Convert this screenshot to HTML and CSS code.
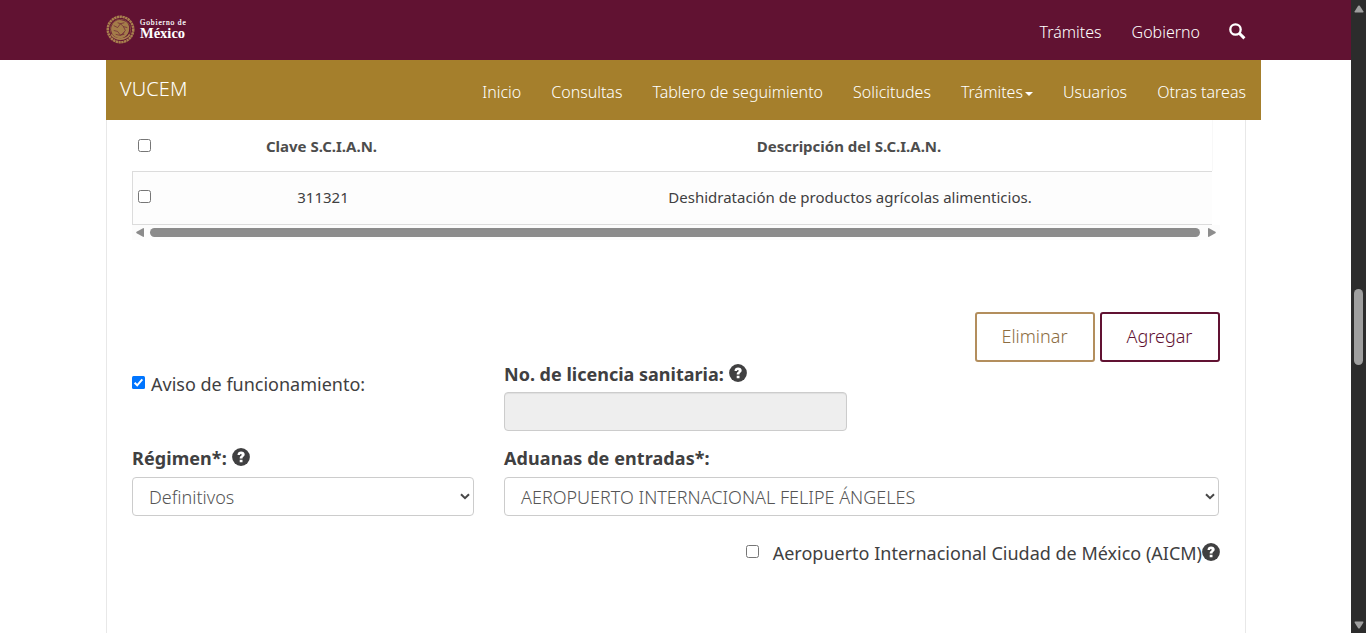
FILE: index.html
```html
<!DOCTYPE html>
<html lang="es">
<head>
<meta charset="utf-8">
<title>VUCEM</title>
<link rel="stylesheet" href="styles.css">
</head>
<body>
<svg class="defs" aria-hidden="true">
  <symbol id="help" viewBox="0 0 18 18">
    <circle cx="9" cy="9" r="8.9" fill="#404041"/>
    <path d="M5.500 7C5.500 4.500 7 3.500 9.100 3.500c2.200 0 3.600 1.200 3.600 3 0 2-2.200 2.100-2.200 3.500v.6H7.700v-.9c0-1.800 2-2 2-3 0-.5-.3-.8-.8-.8-.6 0-.9.400-.9 1.100zM7.700 11.700h2.800v2.600H7.700z" fill="#fff"/>
  </symbol>
  <symbol id="chevron" viewBox="0 0 10 7">
    <path d="M1 1.200 5 5.200 9 1.200" fill="none" stroke="#474747" stroke-width="2"/>
  </symbol>
</svg>
<div class="page">
  <header class="gov">
    <div class="gov-inner">
      <div class="brand">
        <svg class="seal" viewBox="0 0 30 30" fill="none" stroke="#a9814e">
          <circle cx="15" cy="15" r="13.200" stroke-width="2.600" stroke-dasharray="2.400 .5"/>
          <circle cx="15" cy="15" r="10.600" stroke-width=".5"/>
          <path d="M6 11c2-5 7-7 12-5 4 1 6 4 6 8 0 5-3 9-8 10-5 0-9-2-10-6-1-2-1-5 0-7z" fill="#a47d49" stroke="none"/>
          <path d="M8 11l4 2 3-4 3 3 4 1M8 16l4 1 3 4 4-3M12 8l3 1 4-1M10 20l4 1 5-1M18 12l2 4-3 4" stroke="#611232" stroke-width=".6"/>
          <path d="M5.500 20c4 6.500 15 6.500 19 0" stroke-width="1.800"/>
        </svg>
        <div class="wordmark"><span class="word-small">Gobierno de</span><span class="word-big">México</span></div>
      </div>
      <nav class="gov-nav">
        <a>Trámites</a><a>Gobierno</a>
        <svg class="search" viewBox="0 0 17 17" fill="none" stroke="#fff"><circle cx="6.500" cy="6.500" r="5.200" stroke-width="2.300"/><path d="M10.300 10.300 15.400 15.400" stroke-width="3"/></svg>
      </nav>
    </div>
  </header>
  <div class="subbar">
    <span class="title">VUCEM</span>
    <nav class="menu">
      <a>Inicio</a><a>Consultas</a><a>Tablero de seguimiento</a><a>Solicitudes</a><a class="drop">Trámites<i class="caret"></i></a><a>Usuarios</a><a>Otras tareas</a>
    </nav>
  </div>
  <main class="card">
    <div class="table">
      <div class="row head"><span><i class="box"></i></span><b>Clave S.C.I.A.N.</b><b>Descripción del S.C.I.A.N.</b></div>
      <div class="row data"><span><i class="box"></i></span><span class="cell">311321</span><span class="cell">Deshidratación de productos agrícolas alimenticios.</span></div>
    </div>
    <div class="hscroll">
      <svg viewBox="0 0 8 9"><path d="M8 .8v7.400Q8 9.200 7 8.800L.6 5.200Q-.2 4.500.6 3.800L7 .2Q8-.2 8 .8z" fill="#8b8b8b"/></svg>
      <i class="hthumb"></i>
      <svg class="right" viewBox="0 0 8 9"><path d="M0 .8v7.400Q0 9.200 1 8.800L7.400 5.200Q8.200 4.500 7.400 3.800L1 .2Q0-.2 0 .8z" fill="#8b8b8b"/></svg>
    </div>
    <div class="actions"><button class="btn gold">Eliminar</button><button class="btn wine">Agregar</button></div>
    <div class="form">
      <label class="notice"><svg class="checked" viewBox="0 0 13 13"><rect width="13" height="13" rx="1.500" fill="#0075ff"/><path d="M2.600 6.800 5.200 9.300 10.300 3.300" fill="none" stroke="#fff" stroke-width="2"/></svg><span>Aviso de funcionamiento:</span></label>
      <div class="field license"><div class="label">No. de licencia sanitaria: <svg class="help"><use href="#help"/></svg></div><div class="control disabled"></div></div>
      <div class="field lower"><div class="label regime">Régimen*: <svg class="help"><use href="#help"/></svg></div><div class="control"><span>Definitivos</span><svg class="chev"><use href="#chevron"/></svg></div></div>
      <div class="field lower wide"><div class="label entry">Aduanas de entradas*:</div><div class="control"><span>AEROPUERTO INTERNACIONAL FELIPE ÁNGELES</span><svg class="chev"><use href="#chevron"/></svg></div></div>
    </div>
    <div class="aicm"><i class="box"></i><span>Aeropuerto Internacional Ciudad de México (AICM)</span><svg class="help"><use href="#help"/></svg></div>
  </main>
</div>
<div class="vscroll">
  <svg viewBox="0 0 10 8"><path d="M4.200.8Q5 0 5.800.8L9.300 6.200Q9.800 7.500 8.800 7.500H1.200Q.2 7.500.7 6.200z" fill="#9f9f9f"/></svg>
  <i class="vthumb"></i>
  <svg viewBox="0 0 10 8"><path d="M4.200 7.200Q5 8 5.800 7.200L9.300 1.800Q9.800.5 8.800.5H1.200Q.2.5.7 1.800z" fill="#9f9f9f"/></svg>
</div>
</body>
</html>
```
FILE: styles.css
```css
* { box-sizing: border-box; }
body { margin: 0; display: flex; width: 1366px; height: 633px; overflow: hidden; background: #fff; color: #404041; font: 400 18px/24px "Noto Sans", sans-serif; }
svg, i { display: block; flex: none; }
.defs { position: absolute; width: 0; height: 0; }
.page { width: 1351px; height: 633px; display: flex; flex-direction: column; }
.gov { height: 60px; background: #611232; flex: none; }
.gov-inner { margin-left: 106px; width: 1140px; display: flex; justify-content: space-between; }
.brand { display: flex; padding-top: 15px; gap: 4px; }
.seal { width: 29px; height: 29px; }
.wordmark { display: flex; flex-direction: column; color: #fff; font-family: "Liberation Serif", serif; padding: 5px 0 0 1px; }
.word-small { font-size: 7.5px; line-height: 8px; letter-spacing: .85px; height: 7px; margin-top: -1px; -webkit-text-stroke: .2px #fff; }
.word-big { font-size: 14.5px; line-height: 14px; font-weight: 700; }
.gov-nav { display: flex; gap: 30px; padding-top: 20px; color: #fff; font-size: 16px; font-weight: 300; }
.gov-nav a { margin: 0 -1px 0 1px; }
.search { width: 17px; height: 17px; margin-top: 3px; }
.subbar { width: 1155px; height: 60px; margin-left: 106px; padding: 0 15px 0 14px; background: #a57f2c; color: #fff; display: flex; justify-content: space-between; flex: none; font-weight: 300; }
.title { font-size: 20px; line-height: 58px; letter-spacing: .1px; }
.menu { display: flex; gap: 30px; font-size: 16px; line-height: 64px; }
.drop { display: flex; gap: 2px; }
.caret { border: 4px solid transparent; border-top-color: #fff; border-bottom: 0; margin-top: 32px; }
.card { margin-left: 106px; width: 1140px; height: 513px; border: solid #e8e8e8; border-width: 0 1px; padding: 0 26px 0 25px; }
.table { width: 1081px; font-size: 15px; }
.row { display: grid; grid-template-columns: 25px 329px 1fr; text-align: center; }
.head { height: 51px; padding-top: 14px; color: #4d4d4d; border-right: 1px solid #f8f8f8; }
.data { height: 54px; width: 1080px; padding-top: 13px; background: #fdfdfd; border: 1px solid #dcdcdc; border-right: 0; }
.cell { padding-left: 1px; }
.box { width: 13px; height: 13px; border: 1px solid #767676; border-radius: 2.5px; background: #fff; }
.head .box { margin: 5px 0 0 6px; }
.data .box { margin: 5px 0 0 5px; }
.hscroll { width: 1088px; height: 15px; display: flex; align-items: center; gap: 6px; padding-left: 4px; background: #fcfcfc; }
.hscroll svg { width: 8px; height: 9px; }
.hscroll .right { margin-left: 2px; }
.hthumb { width: 1050px; height: 9px; border-radius: 5px; background: #8b8b8b; }
.actions { display: flex; gap: 5px; margin: 72px -1px 0 0; justify-content: flex-end; }
.btn { width: 120px; height: 50px; padding: 0 1px 2px 0; border: 2px solid; border-radius: 3px; background: #fff; font: 300 18px/24px "Noto Sans", sans-serif; }
.gold { color: #8c6d42; border-color: #b38e5d; }
.wine { color: #611232; border-color: #611232; }
.form { display: grid; grid-template-columns: 342px 343px 342px; column-gap: 30px; }
.notice { display: flex; gap: 6px; padding-top: 10px; }
.checked { width: 13px; height: 13px; margin-top: 4px; }
.license { grid-column: 2 / 4; }
.license .control { width: 343px; }
.wide { grid-column: 2 / 4; }
.field { height: 84px; }
.label { display: flex; gap: 5px; height: 30px; font-weight: 700; }
.lower .label { height: 31px; }
.regime, .entry { letter-spacing: .08px; }
.help { width: 18px; height: 18px; margin-top: 2px; }
.control { height: 39px; border: 1px solid #ccc; border-radius: 4px; display: flex; justify-content: space-between; align-items: center; padding: 0 3px 0 16px; font-weight: 300; background: #fff; color: #555; }
.control span { padding-top: 1px; }
.disabled { background: #eee; box-shadow: inset 0 1px 1px #0001; }
.chev { width: 10px; height: 7px; }
.aicm { display: flex; justify-content: flex-end; margin: 11px -1px 0 0; }
.aicm .box { margin: 4px 14px 0 0; }
.vscroll { width: 15px; height: 633px; background: #2c2c2c; display: flex; flex-direction: column; align-items: center; padding: 5px 0 4px; }
.vscroll svg { width: 10px; height: 8px; }
.vthumb { width: 9px; height: 76px; margin: 276px 0 256px; border-radius: 5px; background: #9f9f9f; }
```
